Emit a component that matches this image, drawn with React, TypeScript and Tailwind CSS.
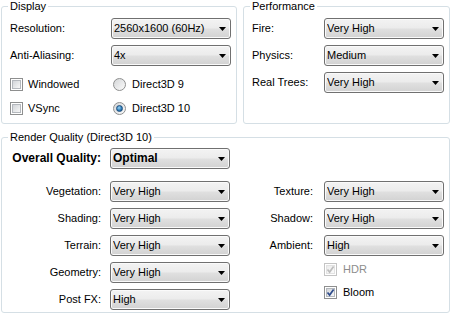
import type { ReactNode } from "react";

const Arrow = () => (
  <svg width="7" height="4" viewBox="0 0 7 4" className="shrink-0">
    <path d="M0 0h7L3.5 4z" fill="#000" />
  </svg>
);

const Combo = ({ value, bold }: { value: string; bold?: boolean }) => (
  <div className="flex h-[21px] w-[120px] shrink-0 items-center rounded-[3px] border border-[#707070] bg-[linear-gradient(#f3f3f3_0%,#ececec_45%,#dfdfdf_55%,#d2d2d2_100%)] pl-[2px] pr-[4px] shadow-[inset_0_0_0_1px_#fafafa]">
    <span className={`flex-1 truncate ${bold ? "text-[12px] font-bold" : ""}`}>{value}</span>
    <Arrow />
  </div>
);

const CheckBox = ({ checked, disabled }: { checked?: boolean; disabled?: boolean }) => (
  <div
    className={`relative h-[13px] w-[13px] shrink-0 border bg-white ${
      disabled ? "border-[#c4c4c4]" : "border-[#8e8f8f]"
    }`}
  >
    <div
      className={`absolute inset-[1px] border ${
        disabled
          ? "border-[#e2e2e2] bg-[linear-gradient(135deg,#ececec,#fbfbfb)]"
          : "border-[#b4b8bd] bg-[linear-gradient(135deg,#d2d5d9,#f7f7f7)]"
      }`}
    />
    {checked && (
      <svg width="11" height="11" viewBox="0 0 11 11" className="absolute left-0 top-0">
        <path
          d="M2.5 5.5L4.6 8L8.6 2.5"
          fill="none"
          stroke={disabled ? "#bdbdbd" : "#2f4c8c"}
          strokeWidth="1.7"
        />
      </svg>
    )}
  </div>
);

const Radio = ({ checked }: { checked?: boolean }) => (
  <div className="relative flex h-[13px] w-[13px] shrink-0 items-center justify-center rounded-full border border-[#8e8f8f] bg-[linear-gradient(135deg,#d4d6d8,#fbfbfb)]">
    {checked && (
      <div className="h-[7px] w-[7px] rounded-full border border-[#1c4d7c] bg-[radial-gradient(circle_at_40%_35%,#9ad3f4,#2a78b5_60%,#1a4f85)]" />
    )}
  </div>
);

const Group = ({ title, className, children }: { title: string; className: string; children: ReactNode }) => (
  <div className={`relative rounded-[3px] border border-[#d5dfe5] ${className}`}>
    <span className="absolute -top-[7px] left-[6px] bg-white px-[2px] leading-[13px]">{title}</span>
    {children}
  </div>
);

const Row = ({ label, value, w }: { label: string; value: string; w: string }) => (
  <div className="flex h-[21px] items-center">
    <span className={w}>{label}</span>
    <Combo value={value} />
  </div>
);

const RightRow = ({ label, value, w, gap }: { label: string; value: string; w: string; gap: string }) => (
  <div className={`flex h-[21px] items-center ${gap}`}>
    <span className={`${w} text-right`}>{label}</span>
    <Combo value={value} />
  </div>
);

export default function App() {
  return (
    <div className="h-[314px] w-[451px] bg-white pl-[1px] pt-[6px] font-['Liberation_Sans',Arial,sans-serif] text-[11px] leading-[13px] text-black">
      <div className="flex gap-[6px]">
        <Group title="Display" className="h-[118px] w-[236px] pl-[8px] pt-[11px]">
          <div className="flex flex-col gap-[6px]">
            <Row label="Resolution:" value="2560x1600 (60Hz)" w="w-[101px]" />
            <Row label="Anti-Aliasing:" value="4x" w="w-[101px]" />
          </div>
          <div className="mt-[8px] grid grid-cols-[103px_auto] gap-y-[3px]">
            <div className="flex h-[21px] items-center gap-[5px]">
              <CheckBox />
              <span>Windowed</span>
            </div>
            <div className="flex h-[21px] items-center gap-[6px]">
              <Radio />
              <span>Direct3D 9</span>
            </div>
            <div className="flex h-[21px] items-center gap-[5px]">
              <CheckBox />
              <span>VSync</span>
            </div>
            <div className="flex h-[21px] items-center gap-[6px]">
              <Radio checked />
              <span>Direct3D 10</span>
            </div>
          </div>
        </Group>
        <Group title="Performance" className="h-[118px] w-[207px] pl-[8px] pt-[11px]">
          <div className="flex flex-col gap-[6px]">
            <Row label="Fire:" value="Very High" w="w-[72px]" />
            <Row label="Physics:" value="Medium" w="w-[72px]" />
            <Row label="Real Trees:" value="Very High" w="w-[72px]" />
          </div>
        </Group>
      </div>

      <Group title="Render Quality (Direct3D 10)" className="mt-[13px] h-[176px] w-[449px] pl-[8px] pt-[10px]">
        <div className="flex h-[21px] items-center gap-[9px]">
          <span className="w-[91px] text-right text-[12px] font-bold">Overall Quality:</span>
          <Combo value="Optimal" bold />
        </div>
        <div className="mt-[12px] flex">
          <div className="flex flex-col gap-[6px]">
            <RightRow label="Vegetation:" value="Very High" w="w-[91px]" gap="gap-[9px]" />
            <RightRow label="Shading:" value="Very High" w="w-[91px]" gap="gap-[9px]" />
            <RightRow label="Terrain:" value="Very High" w="w-[91px]" gap="gap-[9px]" />
            <RightRow label="Geometry:" value="Very High" w="w-[91px]" gap="gap-[9px]" />
            <RightRow label="Post FX:" value="High" w="w-[91px]" gap="gap-[9px]" />
          </div>
          <div className="ml-[20px] flex flex-col">
            <div className="flex flex-col gap-[6px]">
              <RightRow label="Texture:" value="Very High" w="w-[63px]" gap="gap-[11px]" />
              <RightRow label="Shadow:" value="Very High" w="w-[63px]" gap="gap-[11px]" />
              <RightRow label="Ambient:" value="High" w="w-[63px]" gap="gap-[11px]" />
            </div>
            <div className="mt-[3px] flex h-[21px] items-center gap-[6px] pl-[74px] text-[#8d8d8d]">
              <CheckBox checked disabled />
              <span>HDR</span>
            </div>
            <div className="mt-[2px] flex h-[21px] items-center gap-[6px] pl-[74px]">
              <CheckBox checked />
              <span>Bloom</span>
            </div>
          </div>
        </div>
      </Group>
    </div>
  );
}
